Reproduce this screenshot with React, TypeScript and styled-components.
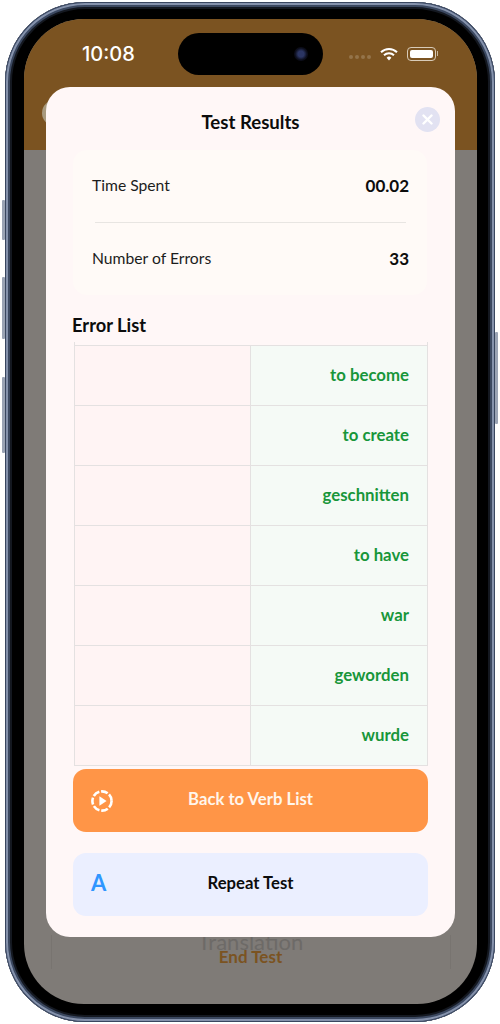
import React from 'react';
import styled, { createGlobalStyle } from 'styled-components';

const errors = ['to become', 'to create', 'geschnitten', 'to have', 'war', 'geworden', 'wurde'];

const GlobalStyle = createGlobalStyle`
  html, body {
    margin: 0;
    padding: 0;
    background: #fff;
  }
  * {
    box-sizing: border-box;
  }
  body {
    font-family: Lato, 'Liberation Sans', sans-serif;
  }
`;

const Device = styled.div`
  position: relative;
  width: 490px;
  height: 1020px;
  margin: 2px 5px;
  padding: 17px 18px 18px 19px;
  border-radius: 80px;
  background: #000;
  box-shadow:
    inset 0 0 0 1px #39465f,
    inset 0 0 0 3px #8592ac,
    inset 0 0 0 5px #3b4860,
    inset 0 0 0 7px #141820;
`;

const SideButton = styled.div<{ $side: 'left' | 'right'; $top: number; $height: number }>`
  position: absolute;
  ${p => p.$side}: -3px;
  top: ${p => p.$top}px;
  height: ${p => p.$height}px;
  width: 3px;
  background: #9aa3b4;
  border-radius: 1px;
`;

const Screen = styled.div`
  position: relative;
  height: 100%;
  display: flex;
  flex-direction: column;
  border-radius: 60px;
  overflow: hidden;
  background: #7f7b77;
`;

const Header = styled.div`
  position: relative;
  height: 131px;
  flex: none;
  background: #7b5321;
`;

const StatusBar = styled.div`
  display: flex;
  align-items: center;
  height: 42px;
  margin-top: 14px;
  padding-left: 58px;
  padding-right: 41px;
`;

const Time = styled.span`
  width: 96px;
  font-family: Inter, sans-serif;
  font-size: 20px;
  font-weight: 500;
  color: #fff;
`;

const Island = styled.div`
  display: flex;
  align-items: center;
  justify-content: flex-end;
  width: 145px;
  height: 42px;
  padding-right: 15px;
  border-radius: 21px;
  background: #000;
`;

const Camera = styled.div`
  width: 14px;
  height: 14px;
  border-radius: 50%;
  background: radial-gradient(circle, #2b3563 0 30%, #0c0e1c 60%, #07070c 100%);
`;

const StatusIcons = styled.div`
  display: flex;
  align-items: center;
  margin-left: auto;
`;

const SignalDots = styled.div`
  display: flex;
  gap: 2px;
  margin-top: 6px;
  margin-right: 9px;
`;

const Dot = styled.span`
  width: 4px;
  height: 4px;
  border-radius: 50%;
  background: #94744a;
`;

const Battery = styled.div`
  position: relative;
  width: 29px;
  height: 14px;
  margin-left: 9px;
  padding: 2px;
  border: 1px solid #d8cbb8;
  border-radius: 4px;

  &::before {
    content: '';
    display: block;
    height: 100%;
    border-radius: 2px;
    background: #fff;
  }

  &::after {
    content: '';
    position: absolute;
    right: -3px;
    top: 3px;
    width: 1px;
    height: 5px;
    background: #c9b89e;
  }
`;

const BackBubble = styled.div`
  position: absolute;
  left: 18px;
  top: 81px;
  width: 26px;
  height: 26px;
  border-radius: 50%;
  background: #a89a7e;
`;

const Behind = styled.div`
  flex: 1;
  display: flex;
  flex-direction: column;
  justify-content: flex-end;
  align-items: center;
  padding-bottom: 35px;
`;

const BehindBox = styled.div`
  display: flex;
  flex-direction: column;
  align-items: center;
  width: 400px;
  padding-bottom: 4px;
  border-left: 1px solid #787470;
  border-right: 1px solid #787470;
`;

const BehindLabel = styled.span`
  font-size: 22px;
  line-height: 14px;
  color: #6d6a67;
`;

const BehindAction = styled.span`
  font-size: 17px;
  font-weight: 700;
  line-height: 16px;
  color: #7b5321;
`;

const Modal = styled.div`
  position: absolute;
  left: 22px;
  top: 68px;
  width: 409px;
  height: 850px;
  padding: 22px 27px 0;
  border-radius: 24px;
  background: #fff7f7;
`;

const Title = styled.h1`
  margin: 0 0 15px;
  font-size: 18.6px;
  line-height: 26px;
  font-weight: 700;
  text-align: center;
  color: #0c0c0c;
`;

const CloseButton = styled.button`
  position: absolute;
  right: 15px;
  top: 20px;
  width: 25px;
  height: 25px;
  padding: 0;
  display: flex;
  align-items: center;
  justify-content: center;
  border: 0;
  border-radius: 50%;
  background: #e2e2f2;
`;

const SummaryCard = styled.div`
  height: 145px;
  width: 354px;
  border-radius: 14px;
  background: #fffaf7;
`;

const SummaryRow = styled.div`
  display: flex;
  align-items: center;
  justify-content: space-between;
  height: 72px;
  padding: 0 18px 2px 19px;
`;

const SummaryLabel = styled.span`
  font-size: 15.7px;
  color: #1c1c1c;
`;

const SummaryValue = styled.span`
  font-size: 17px;
  font-weight: 700;
  color: #0c0c0c;
`;

const Divider = styled.div`
  height: 1px;
  margin: 0 21px 0 22px;
  background: #e8e5e2;
`;

const SectionTitle = styled.h2`
  margin: 18px 0 5px -1px;
  font-size: 18.3px;
  line-height: 24px;
  font-weight: 700;
  color: #0c0c0c;
`;

const ErrorTable = styled.div`
  width: 354px;
  margin-left: 1px;
  display: grid;
  grid-template-columns: 176px 176px;
  grid-template-rows: 4px repeat(7, 60px);
  border-left: 1px solid #e4e1e1;
  border-right: 1px solid #e4e1e1;
`;

const TableHead = styled.div`
  grid-column: 1 / 3;
  border-bottom: 1px solid #e4e1e1;
`;

const Cell = styled.div<{ $kind: 'wrong' | 'right' }>`
  display: flex;
  align-items: center;
  justify-content: flex-end;
  padding: 0 18px 2px 0;
  border-bottom: 1px solid #e4e1e1;
  border-right: ${p => (p.$kind === 'wrong' ? '1px solid #e4e1e1' : '0')};
  background: ${p => (p.$kind === 'wrong' ? '#fff4f4' : '#f5faf6')};
  color: #18963a;
  font-size: 16.8px;
  font-weight: 700;
`;

const ActionButton = styled.button<{ $variant: 'primary' | 'secondary' }>`
  position: relative;
  display: flex;
  align-items: center;
  justify-content: center;
  width: 355px;
  height: 63px;
  margin-top: ${p => (p.$variant === 'primary' ? '3px' : '21px')};
  padding: 0 0 4px;
  border: 0;
  border-radius: 13px;
  font-family: inherit;
  font-size: 16.7px;
  font-weight: 700;
  background: ${p => (p.$variant === 'primary' ? '#ff9547' : '#ebefff')};
  color: ${p => (p.$variant === 'primary' ? '#fff6ec' : '#0c0c0c')};
`;

const ButtonIcon = styled.span`
  position: absolute;
  left: 17px;
  top: 50%;
  transform: translateY(-50%);
  display: flex;
  align-items: center;
`;

const LetterIcon = styled(ButtonIcon)`
  left: 18px;
  top: 46%;
  font-size: 22px;
  font-weight: 700;
  color: #2f96ff;
`;

export default function App() {
  return (
    <>
      <GlobalStyle />
      <Device>
        <SideButton $side="left" $top={198} $height={40} />
        <SideButton $side="left" $top={275} $height={62} />
        <SideButton $side="left" $top={375} $height={76} />
        <SideButton $side="right" $top={330} $height={92} />
        <Screen>
          <Header>
            <StatusBar>
              <Time>10:08</Time>
              <Island>
                <Camera />
              </Island>
              <StatusIcons>
                <SignalDots>
                  <Dot />
                  <Dot />
                  <Dot />
                  <Dot />
                </SignalDots>
                <svg width="18" height="14" viewBox="0 0 18 14" fill="none">
                  <path d="M1 5.2a11.5 11.5 0 0 1 16 0" stroke="#fff" strokeWidth="2" />
                  <path d="M4 8.2a7.2 7.2 0 0 1 10 0" stroke="#fff" strokeWidth="2" />
                  <path d="M6.6 10.8a3.4 3.4 0 0 1 4.8 0L9 13.4z" fill="#fff" />
                </svg>
                <Battery />
              </StatusIcons>
            </StatusBar>
            <BackBubble />
          </Header>
          <Behind>
            <BehindBox>
              <BehindLabel>Translation</BehindLabel>
              <BehindAction>End Test</BehindAction>
            </BehindBox>
          </Behind>
          <Modal>
            <Title>Test Results</Title>
            <CloseButton aria-label="Close">
              <svg width="11" height="11" viewBox="0 0 11 11" fill="none">
                <path d="M1.5 1.5l8 8M9.5 1.5l-8 8" stroke="#fff" strokeWidth="2.4" strokeLinecap="round" />
              </svg>
            </CloseButton>
            <SummaryCard>
              <SummaryRow>
                <SummaryLabel>Time Spent</SummaryLabel>
                <SummaryValue>00.02</SummaryValue>
              </SummaryRow>
              <Divider />
              <SummaryRow>
                <SummaryLabel>Number of Errors</SummaryLabel>
                <SummaryValue>33</SummaryValue>
              </SummaryRow>
            </SummaryCard>
            <SectionTitle>Error List</SectionTitle>
            <ErrorTable>
              <TableHead />
              {errors.map(word => (
                <React.Fragment key={word}>
                  <Cell $kind="wrong" />
                  <Cell $kind="right">{word}</Cell>
                </React.Fragment>
              ))}
            </ErrorTable>
            <ActionButton $variant="primary">
              <ButtonIcon>
                <svg width="24" height="24" viewBox="0 0 24 24" fill="none">
                  <circle cx="12" cy="12" r="9.6" stroke="#fff" strokeWidth="2.6" strokeDasharray="7 1.8" />
                  <path d="M9.4 7.2l7.2 4.8-7.2 4.8z" fill="#fff" />
                </svg>
              </ButtonIcon>
              Back to Verb List
            </ActionButton>
            <ActionButton $variant="secondary">
              <LetterIcon>A</LetterIcon>
              Repeat Test
            </ActionButton>
          </Modal>
        </Screen>
      </Device>
    </>
  );
}
